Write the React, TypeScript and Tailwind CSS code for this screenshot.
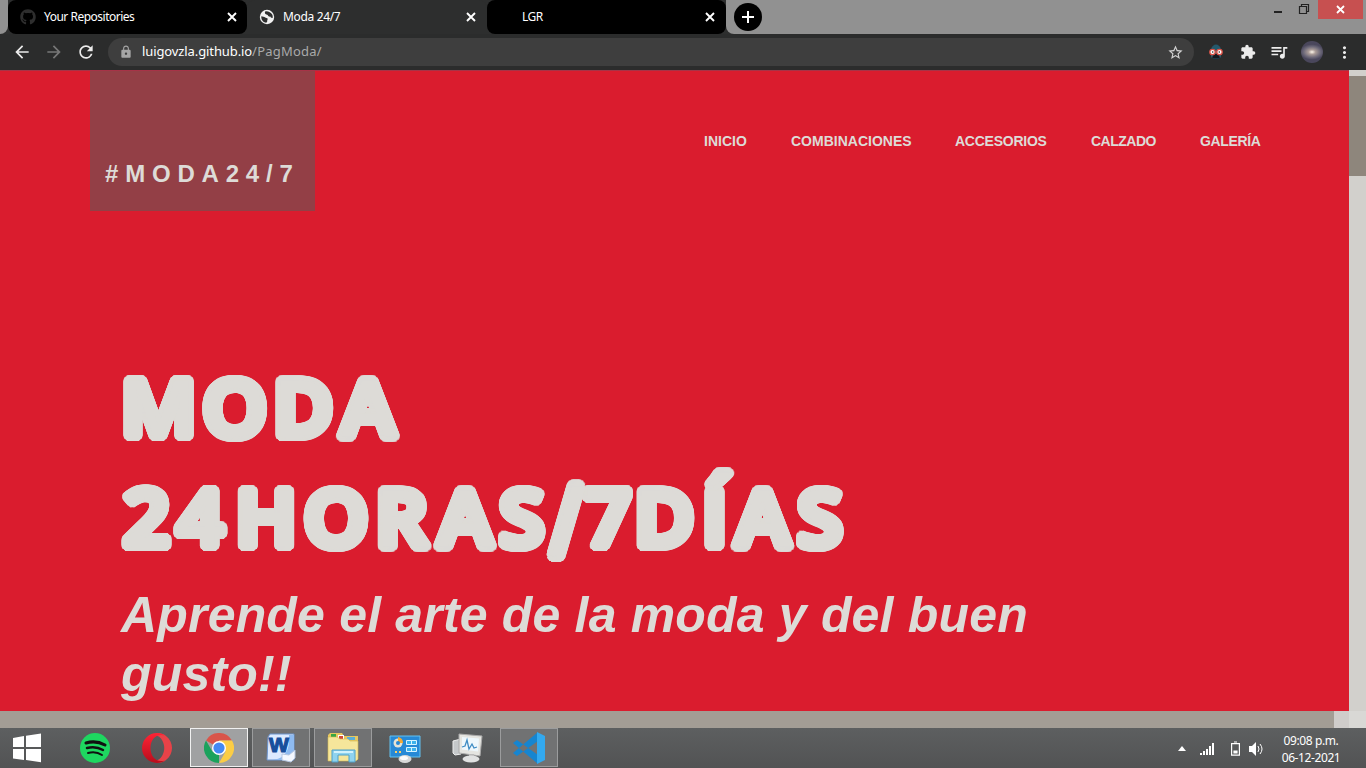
import React from "react";
import {
  MdArrowBack, MdArrowForward, MdRefresh, MdLock, MdStarBorder, MdExtension,
  MdQueueMusic, MdMoreVert,
} from "react-icons/md";
import { FaGithub } from "react-icons/fa";

// Ring of shadows that thickens the headline and rounds its corners.
const ring = (radii: number[]) =>
  radii
    .flatMap((r) =>
      Array.from({ length: 32 }, (_, i) => {
        const a = (i * Math.PI) / 16;
        return `${(r * Math.cos(a)).toFixed(2)}px ${(r * Math.sin(a)).toFixed(2)}px 0 #dddbd7`;
      }),
    )
    .join(",");

function TabClose() {
  return (
    <svg className="h-[10px] w-[10px]" viewBox="0 0 10 10" stroke="#fff" strokeWidth="1.9">
      <path d="M1 1l8 8M9 1l-8 8" />
    </svg>
  );
}

function TabStrip() {
  return (
    <div className="flex h-[34px] bg-gradient-to-r from-[#2d2e2e] from-50% to-[#2d2e2e] to-50%">
      <div className="w-2 rounded-br-lg bg-[#919191]" />
      <div className="flex w-[239px] items-center rounded-lg bg-black pr-[10px] pl-3 text-xs text-white">
        <FaGithub className="h-4 w-4 text-[#2e2e2e]" />
        <span className="ml-2 flex-1 tracking-[-0.5px]">Your Repositories</span>
        <TabClose />
      </div>
      <div className="flex w-[240px] items-center rounded-t-lg bg-[#2d2e2e] pr-[11px] pl-[12px] text-xs text-white">
        <svg className="h-4 w-4" viewBox="0 0 16 16">
          <circle cx="8" cy="8" r="7.200" fill="#f1f1f1" />
          <path d="M6.200 2.400c2.600-.5 5.800.8 7 3.200.7 1.500.6 2.700.4 3.400-1.300.2-2-.5-2.300-1.400-.8.300-2 .1-2.300-1-.2-.9-1.300-.6-2.200-1.300-.9-.8-1.200-2.200-.6-2.900zM2.300 7.200c1.500.3 3 .4 3.900 1.200.7.700 1.900.4 2.400 1.200.4.800-.5 1.500-.4 2.500.1.700-.3 1.300-1 1.700C4 13.300 2 10.500 2.300 7.200z" fill="#2d2e2e" />
        </svg>
        <span className="ml-2 flex-1 tracking-[-0.35px]">Moda 24/7</span>
        <TabClose />
      </div>
      <div className="flex w-[239px] items-center rounded-lg bg-black pr-[11px] pl-[35px] text-xs text-white">
        <span className="flex-1 tracking-[-0.5px]">LGR</span>
        <TabClose />
      </div>
      <div className="flex flex-1 rounded-bl-lg bg-[#919191]">
        <div className="mt-[3px] ml-2 flex h-7 w-7 items-center justify-center rounded-full bg-black">
          <svg className="h-3 w-3" viewBox="0 0 12 12" stroke="#fff" strokeWidth="2"><path d="M6 0v12M0 6h12" /></svg>
        </div>
        <div className="flex-1" />
        <svg className="h-5 w-[44px]" viewBox="0 0 44 20" fill="none" stroke="#222" strokeWidth="1.2">
          <path d="M0 12h8" strokeWidth="2" />
          <path d="M25.500 6.500h7v7h-7zM27.500 6.500V4.500h7v7h-2" />
        </svg>
        <div className="mr-[3px] flex h-[19px] w-[45px] items-center justify-center bg-[#c75050]">
          <svg className="h-[9px] w-[9px]" viewBox="0 0 9 9" stroke="#fff" strokeWidth="1.8">
            <path d="M1 1l7 7M8 1l-7 7" />
          </svg>
        </div>
      </div>
    </div>
  );
}

function Toolbar() {
  return (
    <div className="flex h-9 items-center bg-[#2b2c2c] text-[#ececec]">
      <MdArrowBack className="ml-3 h-5 w-5" />
      <MdArrowForward className="ml-3 h-5 w-5 text-[#777]" />
      <MdRefresh className="ml-3 h-5 w-5" />
      <div className="ml-3 flex h-7 w-[1086px] items-center rounded-full bg-[#3e3e3e] pr-[10px] pl-[11px]">
        <MdLock className="h-[14px] w-[14px] text-[#a5a5a5]" />
        <span className="ml-[9px] flex-1 text-[13px] tracking-[-0.1px] text-white">
          luigovzla.github.io<span className="tracking-[0.2px] text-[#aaa]">/PagModa/</span>
        </span>
        <MdStarBorder className="h-[17px] w-[17px] text-[#d2d2d2]" />
      </div>
      <svg className="ml-[14px] h-4 w-4" viewBox="0 0 16 16">
        <path d="M3 5C4 2 6 .5 8 .5S12 2 13 5v9L11 12v3H5v-3l-2 2z" fill="#24596c" />
        <path d="M5 10h6v4.500H5z" fill="#131820" />
        <circle cx="4.500" cy="8" r="2.700" fill="#fff" stroke="#dd5145" strokeWidth="1.300" />
        <circle cx="11.500" cy="8" r="2.700" fill="#fff" stroke="#dd5145" strokeWidth="1.300" />
        <circle cx="4.700" cy="8" r=".8" fill="#222" />
        <circle cx="11.300" cy="8" r=".8" fill="#222" />
      </svg>
      <MdExtension className="ml-4 h-4 w-4" />
      <MdQueueMusic className="ml-[13px] h-5 w-5" />
      <svg className="ml-[12px] h-[22px] w-[22px]" viewBox="0 0 22 22">
        <defs>
          <radialGradient id="galaxy" gradientTransform="translate(.5 .5) scale(1.1 .7) translate(-.5 -.5)">
            <stop offset="0" stopColor="#fff8ec" />
            <stop offset=".3" stopColor="#aa9c98" />
            <stop offset=".7" stopColor="#6d6979" />
            <stop offset="1" stopColor="#4a475c" />
          </radialGradient>
        </defs>
        <circle cx="11" cy="11" r="11" fill="url(#galaxy)" />
      </svg>
      <MdMoreVert className="ml-3 h-[19px] w-[19px]" />
    </div>
  );
}

function Page() {
  return (
    <div className="flex h-[641px]">
      <main className="w-[1349px] border-t border-[#a63347] bg-[#da1c2e] pl-[90px] font-['Liberation_Sans',Arial,sans-serif] font-bold text-[#dddbd7]">
        <header className="flex h-[140px]">
          <div className="flex w-[225px] items-end bg-[#933f46] pb-[19px] pl-[15px]">
            <span className="text-[24px] leading-9 tracking-[6.8px]">#MODA24/7</span>
          </div>
          <nav className="flex pt-[60px] pl-[389px] text-[14px] leading-5 whitespace-nowrap">
            <a className="w-[87px]">INICIO</a>
            <a className="w-[164px]">COMBINACIONES</a>
            <a className="w-[136px] tracking-[-0.25px]">ACCESORIOS</a>
            <a className="w-[109px] tracking-[-0.5px]">CALZADO</a>
            <a className="tracking-[-0.35px]">GALERÍA</a>
          </nav>
        </header>
        <section className="pt-[141px] pl-[31px]">
          <h1
            className="origin-left scale-x-[1.06] font-['Open_Sans',sans-serif] text-[77px] leading-[110px] font-semibold whitespace-nowrap"
            style={{ textShadow: ring([4.9, 2.4]) }}
          >
            <span className="block tracking-[6px]">MO<span className="tracking-[7.5px]">D</span>A</span>
            <span className="block pl-[2px] tracking-[6.8px]">
              2<span className="tracking-[11px]">4</span>HO<span className="tracking-[10px]">R</span>A<span className="tracking-[7px]">S</span>
              <span
                className="inline-block w-[31px] origin-left scale-x-[0.74] align-[-9px] text-[96px] leading-[0] tracking-normal"
                style={{ textShadow: ring([7, 3.5]) }}
              >/</span><span className="tracking-[3px]">7</span><span className="tracking-[7.5px]">D</span><span className="tracking-[8px]">Í</span><span className="tracking-[7.5px]">A</span>S
            </span>
          </h1>
          <p className="w-[960px] pt-[14px] text-[50px] leading-[59px] tracking-[0.18px] italic">Aprende el arte de la moda y del buen gusto!!</p>
        </section>
      </main>
      <div className="w-[17px] bg-[#d2d0cc] pt-[6px]">
        <div className="h-[100px] bg-[#8e867c]" />
      </div>
    </div>
  );
}

function Word() {
  return (
    <svg className="h-8 w-8" viewBox="0 0 32 32">
      <path d="M5 2h24v26H2L3 5z" fill="#dceaff" stroke="#6a92cc" />
      <path d="M24 3h5v25H7c12-1 18-8 17-25z" fill="#8ebaf0" />
      <text x="4" y="20" fontSize="21" fontWeight="900" fontFamily="Liberation Sans" fill="#174f9c" stroke="#174f9c" strokeWidth="1.200">W</text>
      <path d="M17 22l7 1 6-5v8l-4 4-9-2z" fill="#f4f8ff" stroke="#b6c7e1" />
    </svg>
  );
}

function Explorer() {
  return (
    <svg className="h-8 w-8" viewBox="0 0 32 32">
      <path d="M1 3l2-2h12l2 3h14v24H1z" fill="#e7c75e" />
      <path d="M4 2h5v5H4z" fill="#38a644" /><path d="M11 3h6v4h-6z" fill="#fff" />
      <path d="M12 4h4v3h-4z" fill="#d34b37" /><path d="M20 5h8v3h-8z" fill="#5aaed8" />
      <path d="M1 5h9l3 2h8l2 2h8v18l-2 2H1z" fill="#f6e69b" stroke="#d5ba52" strokeWidth=".6" />
      <path d="M5 18h23v12h-6v-7h-11v7H5z" fill="#8fd3ef" stroke="#4fa0c8" />
      <path d="M7 19h19v2H7z" fill="#d2f2fc" />
    </svg>
  );
}

function Panel() {
  return (
    <svg className="h-8 w-8" viewBox="0 0 32 32">
      <path d="M1 4h30v21H1z" fill="#2689d6" stroke="#65c2ef" />
      <circle cx="9" cy="11" r="4.500" fill="#e5e3d5" /><path d="M9 11V5a6 6 0 015 6z" fill="#f5a932" /><circle cx="9" cy="11" r="2" fill="#2689d6" />
      <path d="M17.500 8.500h10v4h-10zM17.500 15.500h10v4h-10zM22.500 8.500v4M22.500 15.500v4" fill="#3cb2eb" stroke="#d5f3ff" />
      <path d="M6 20h2M10 20h2" stroke="#ffd064" strokeWidth="2" />
      <ellipse cx="16" cy="27" rx="6.500" ry="4" fill="#d8d8d8" /><ellipse cx="15" cy="26" rx="4" ry="2" fill="#fafafa" />
    </svg>
  );
}

function Monitor() {
  return (
    <svg className="h-8 w-8" viewBox="0 0 32 32">
      <path d="M2 9l8-2v15l-6 1-2-2z" fill="#c5c8ca" stroke="#eee" />
      <path d="M8 2l23 2-2 20-21-3z" fill="#e5e5e1" stroke="#aaa" />
      <path d="M11 5l17 1.500-1 13-16-2z" fill="#eef7fc" />
      <path d="M11 15l3-1 2-6 2 9 3-5 2 4 3-1" fill="none" stroke="#3f8cc4" strokeWidth="1.300" />
      <path d="M18 22h5v4h-5z" fill="#bbb" /><ellipse cx="20" cy="27" rx="8.500" ry="3.500" fill="#e1e2e2" />
    </svg>
  );
}

function Taskbar() {
  return (
    <footer className="flex h-10 bg-[#565758] bg-gradient-to-b from-[#5d5f60] to-[#525354]">
      <svg className="mt-[5px] ml-[12px] h-[30px] w-[30px]" viewBox="0 0 30 30" fill="#fff">
        <path d="M1 5l11-2v11H1zM14 2.700L29 .5V14H14zM1 16h11v11L1 25.500zM14 16h15v13.200L14 27z" />
      </svg>
      <svg className="mt-[5px] ml-[38px] h-[30px] w-[30px]" viewBox="0 0 30 30" fill="none" stroke="#111" strokeLinecap="round">
        <circle cx="15" cy="15" r="15" fill="#1ed760" stroke="none" />
        <path d="M6 10q10-3 19 2" strokeWidth="3" /><path d="M7 15q9-2 16 2" strokeWidth="2.500" /><path d="M8 20q8-2 14 2" strokeWidth="2" />
      </svg>
      <svg className="mt-[5px] ml-8 h-[30px] w-[30px]" viewBox="0 0 30 30">
        <defs><linearGradient id="opera" x2="0" y2="1"><stop stopColor="#ff2435" /><stop offset="1" stopColor="#b80d1c" /></linearGradient></defs>
        <path d="M10 3.500C14-1 20-.5 24 3c8 6 8 18 0 24-4 3.500-10 4-14-.5 4 2.500 8 0 10-3.500 3-5 3-11 0-16-2-3.500-6-6-10-3.500z" fill="#e84248" />
        <path fillRule="evenodd" d="M15 0a15 15 0 100 30c3 0 6-1 8-2.500-9 2.500-14.500-4-14.500-12.500S14 0 23 2.500C21 1 18 0 15 0z" fill="url(#opera)" />
      </svg>
      <div className="ml-[18px] flex h-[39px] w-[58px] items-center justify-center border border-[#f1f1f1] bg-[#a0a1a2]">
        <svg className="h-[30px] w-[30px]" viewBox="0 0 30 30">
          <path d="M15 15L2 7.500A15 15 0 0128 7.500H15z" fill="#d9554a" />
          <path d="M15 15v15A15 15 0 012 7.500l6.500 11.300z" fill="#1ba25c" />
          <path d="M15 7.500h13A15 15 0 0115 30l6.500-11.200z" fill="#fbcd45" />
          <circle cx="15" cy="15" r="7" fill="#fff" /><circle cx="15" cy="15" r="5.600" fill="#4389f4" />
        </svg>
      </div>
      <div className="ml-1 flex h-[39px] w-[58px] items-center justify-center border border-[#9b9c9d] bg-[#717273]"><Word /></div>
      <div className="ml-1 flex h-[39px] w-[58px] items-center justify-center border border-[#9b9c9d] bg-[#717273]"><Explorer /></div>
      <div className="mt-1 ml-[17px]"><Panel /></div>
      <div className="mt-1 ml-[30px]"><Monitor /></div>
      <div className="ml-[17px] flex h-[39px] w-[58px] items-center justify-center border border-[#9b9c9d] bg-[#717273]">
        <svg className="h-8 w-[34px]" viewBox="0 0 34 32">
          <path d="M1 11l4-3 21 15v9zM1 21l4 3L26 9V0z" fill="#1685d0" />
          <path d="M25 0l8 4v24l-8 4z" fill="#33a9ef" />
        </svg>
      </div>
      <div className="flex-1" />
      <svg className="mt-[18px] h-[5px] w-[8px]" viewBox="0 0 8 5" fill="#fff"><path d="M0 5l4-5 4 5z" /></svg>
      <svg className="mt-[15px] ml-[14px] h-[12px] w-[15px]" viewBox="0 0 15 12" fill="#fff"><path d="M0 10h2v2H0zM3 8h2v4H3zM6 6h2v6H6zM9 3h2v9H9zM12 0h2v12h-2z" /></svg>
      <svg className="mt-[13px] ml-[16px] h-[15px] w-[9px]" viewBox="0 0 9 15" fill="none" stroke="#fff" strokeWidth="1.200"><path d="M.6 2.600h7.800v11.500H.6zM3 1h3" /><path d="M3 10h3v2H3z" fill="#fff" /></svg>
      <svg className="mt-[14px] ml-[9px] h-[14px] w-[15px]" viewBox="0 0 15 14"><path d="M0 4h3l4-4v14l-4-4H0z" fill="#fff" /><path d="M9 4q2 3 0 6M11 2q4 5 0 10" stroke="#fff" fill="none" /></svg>
      <div className="mr-[25px] ml-[17px] w-[60px] pt-[5px] text-center text-[12px] leading-4 tracking-[-0.4px] whitespace-nowrap text-white">
        <div>09:08 p.m.</div><div className="pt-px">06-12-2021</div>
      </div>
    </footer>
  );
}

export default function App() {
  return (
    <div className="h-[768px] w-[1366px] overflow-hidden font-['Noto_Sans',sans-serif]">
      <TabStrip />
      <Toolbar />
      <Page />
      <div className="flex h-[17px] bg-[#d9d8d5]">
        <div className="w-[1334px] bg-[#a39d95]" />
        <div className="w-[15px] bg-[#cfccca]" />
      </div>
      <Taskbar />
    </div>
  );
}
